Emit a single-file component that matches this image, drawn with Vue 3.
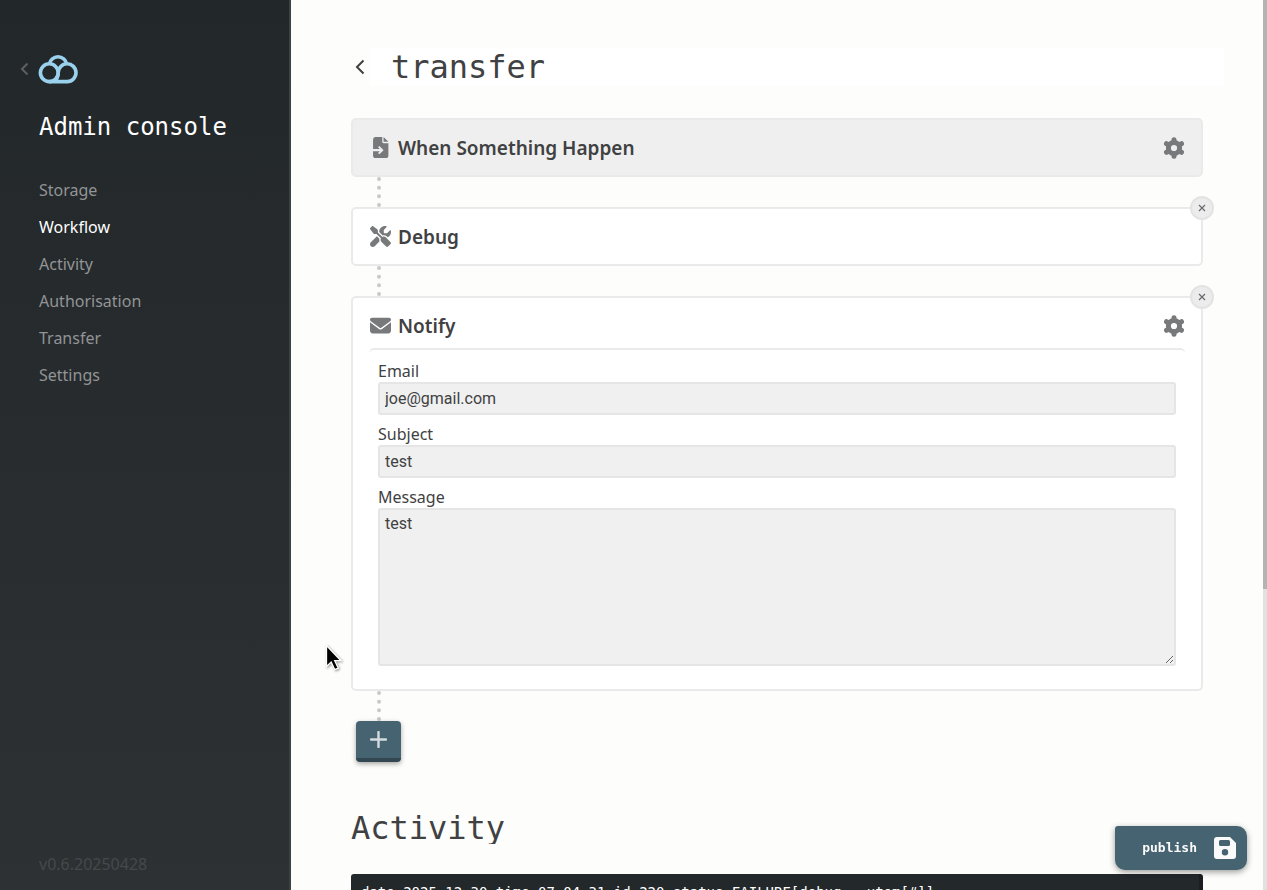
<script setup>
import { ref } from 'vue'

const links = ['Storage', 'Workflow', 'Activity', 'Authorisation', 'Transfer', 'Settings']
const current = 'Workflow'
const title = ref('transfer')
const email = ref('joe@gmail.com')
const subject = ref('test')
const message = ref('test')
const log = 'date=2025-12-30 time=07:04:31 id=220 status=FAILURE[debug : utem[#]]'
const teeth = 'M11 4V2.700M11 18v1.300M5 7.500 3.500 6.700M17 7.500l1.500-.8M5 14.500l-1.500.8M17 14.500l1.500.8'
</script>

<template>
  <div class="app">
    <aside class="sidebar">
      <div class="brand">
        <a href="#" class="collapse" aria-label="Back to files">
          <svg width="10" height="14" viewBox="0 0 10 14"><path d="M7.500 1.500 2 7 7.500 12.500" /></svg>
        </a>
        <svg class="logo" width="40" height="31" viewBox="0 0 40 31">
          <circle cx="11.300" cy="19.700" r="8.900" />
          <path d="M11.400 11A8.700 8.600 0 0 1 28.600 11" />
          <path d="M11.300 28.600H29.200A8.900 8.900 0 1 0 20.200 19.700C20.200 24 18.500 27 15.500 28.600" />
        </svg>
      </div>
      <h2>Admin console</h2>
      <nav>
        <a v-for="l in links" :key="l" href="#" :class="{ active: l === current }">{{ l }}</a>
      </nav>
      <div class="version">v0.6.20250428</div>
    </aside>

    <main class="page">
      <header class="heading">
        <a href="#" class="back" aria-label="Back to workflows">
          <svg width="10" height="16" viewBox="0 0 10 16"><path d="M8.500 1.500 2 8l6.500 6.500" /></svg>
        </a>
        <input v-model="title" class="title" aria-label="Workflow name" />
      </header>

      <section class="step trigger">
        <div class="step-head">
          <svg class="icon" width="21" height="21" viewBox="0 0 24 24">
            <path fill-rule="evenodd" d="M6 0h8v5.500A1.500 1.500 0 0 0 15.500 7H21v14a3 3 0 0 1-3 3H6.500a3 3 0 0 1-3-3v-4.800h7.700l-2 2 1.500 1.500L15.500 15l-4.800-4.700-1.500 1.500 2 2H3.500V3A3 3 0 0 1 6 0zM15.500 0 21 5.500h-5.500z" />
          </svg>
          <h3>When Something Happen</h3>
          <button class="gear" aria-label="Configure trigger">
            <svg width="22" height="22" viewBox="0 0 22 22"><circle cx="11" cy="11" r="5.600" /><path :d="teeth" /></svg>
          </button>
        </div>
      </section>
      <div class="link"></div>

      <section class="step">
        <button class="remove" aria-label="Remove Debug"><svg width="8" height="8" viewBox="0 0 8 8"><path d="M1 1l6 6M7 1 1 7" /></svg></button>
        <div class="step-head">
          <svg class="icon" width="21" height="21" viewBox="0 0 512 512">
            <path d="M78.600 5C69.100-2.400 55.600-1.500 47 7L7 47c-8.500 8.500-9.400 22-2.100 31.600l80 104c4.500 5.900 11.600 9.400 19 9.400h54.100l109 109c-14.700 29-10 65.400 14.300 89.600l112 112c12.500 12.500 32.800 12.500 45.300 0l64-64c12.500-12.500 12.500-32.800 0-45.300l-112-112c-24.200-24.200-60.600-29-89.600-14.300l-109-109V104c0-7.500-3.500-14.500-9.400-19L78.600 5zM19.900 396.100C7.200 408.800 0 426.100 0 444.100C0 481.600 30.400 512 67.900 512c18 0 35.300-7.200 48-19.900L233.700 374.300c-7.800-20.900-9-43.600-3.600-65.100l-61.700-61.700L19.900 396.100zM512 144c0-10.500-1.100-20.700-3.200-30.500c-2.400-11.200-16.100-14.100-24.200-6l-63.900 63.900c-3 3-7.100 4.700-11.300 4.700H352c-8.800 0-16-7.200-16-16V102.600c0-4.200 1.700-8.300 4.700-11.300l63.900-63.900c8.100-8.100 5.200-21.800-6-24.200C388.700 1.100 378.500 0 368 0C288.500 0 224 64.500 224 144l0 .8 85.300 85.300c36-9.100 75.800 .5 104 28.700L429 274.500c49-23 83-72.800 83-130.500z" />
          </svg>
          <h3>Debug</h3>
        </div>
      </section>
      <div class="link"></div>

      <section class="step">
        <button class="remove" aria-label="Remove Notify"><svg width="8" height="8" viewBox="0 0 8 8"><path d="M1 1l6 6M7 1 1 7" /></svg></button>
        <div class="step-head">
          <svg class="icon" width="21" height="21" viewBox="0 0 512 512">
            <path d="M48 64C21.500 64 0 85.500 0 112c0 15.100 7.100 29.300 19.200 38.400L236.800 313.600c11.400 8.500 27 8.500 38.400 0L492.800 150.400c12.100-9.100 19.200-23.300 19.200-38.400c0-26.500-21.500-48-48-48H48zM0 176V384c0 35.300 28.700 64 64 64H448c35.300 0 64-28.700 64-64V176L294.400 339.200c-22.800 17.100-54 17.100-76.800 0L0 176z" />
          </svg>
          <h3>Notify</h3>
          <button class="gear" aria-label="Configure Notify">
            <svg width="22" height="22" viewBox="0 0 22 22"><circle cx="11" cy="11" r="5.600" /><path :d="teeth" /></svg>
          </button>
        </div>
        <form class="fields" @submit.prevent>
          <label for="email">Email</label>
          <input id="email" v-model="email" />
          <label for="subject">Subject</label>
          <input id="subject" v-model="subject" />
          <label for="message">Message</label>
          <textarea id="message" v-model="message"></textarea>
        </form>
      </section>
      <div class="link"></div>
      <button class="add" aria-label="Add step">
        <svg width="17" height="17" viewBox="0 0 17 17"><path d="M8.500 1v15M1 8.500h15" /></svg>
      </button>

      <h2 class="activity">Activity</h2>
      <pre class="log">{{ log }}</pre>
    </main>

    <button class="publish">
      publish
      <svg width="22" height="22" viewBox="0 0 22 22">
        <path fill-rule="evenodd" d="M3 0h13l6 6v13a3 3 0 0 1-3 3H3a3 3 0 0 1-3-3V3a3 3 0 0 1 3-3zM6.500 3A1.500 1.500 0 0 0 5 4.500v3A1.500 1.500 0 0 0 6.500 9h8A1.500 1.500 0 0 0 16 7.500v-3A1.500 1.500 0 0 0 14.500 3zM11 12a3.200 3.200 0 1 0 0 6.400 3.200 3.200 0 0 0 0-6.400z" />
      </svg>
    </button>
    <div class="scrollbar"><div class="thumb"></div></div>
    <svg class="cursor" width="18" height="28" viewBox="0 0 18 28">
      <path d="M1.500 1.500v21l4.700-4.400 3.600 7.600 3.500-1.600-3.600-7.400h6.300z" />
    </svg>
  </div>
</template>

<style>
body {
  overflow: hidden;
}
</style>

<style scoped>
.app {
  display: flex;
  height: 100vh;
  overflow: hidden;
  background: #fdfdfb;
  color: #3f4142;
  font: 16px/22px "Noto Sans", sans-serif;
}
.app * {
  box-sizing: border-box;
}
svg {
  display: block;
}
a {
  text-decoration: none;
  color: inherit;
}
button {
  border: 0;
  padding: 0;
  cursor: pointer;
}
.sidebar {
  flex: 0 0 291px;
  display: flex;
  flex-direction: column;
  padding: 53px 20px 15px 39px;
  border-right: 2px solid #3c4144;
  background: linear-gradient(#22272a, #2d3133);
}
.brand {
  display: flex;
  align-items: center;
  gap: 8px;
  margin-left: -19px;
}
.collapse path,
.back path {
  fill: none;
  stroke: #5d6061;
  stroke-width: 2;
}
.logo {
  fill: none;
  stroke: #9ad1ed;
  stroke-width: 3.6;
}
.sidebar h2 {
  margin: 27px 0 36px;
  color: #fff;
  font: 24px/32px "DejaVu Sans Mono", monospace;
}
nav {
  display: flex;
  flex-direction: column;
  gap: 15px;
  color: #929495;
}
nav .active {
  color: #fff;
}
.version {
  margin-top: auto;
  color: #45494b;
}
.page {
  flex: 1;
  min-width: 0;
  padding: 48px 64px 0 60px;
  overflow: hidden;
}
.heading {
  display: flex;
  align-items: center;
  margin: 0 -21px 32px 4px;
}
.back path {
  stroke: #3f4142;
}
.title {
  flex: 1;
  min-width: 0;
  height: 38px;
  margin-left: 5px;
  padding: 0 21px;
  border: 0;
  background: #fff;
  color: #3f4142;
  font: 32px/38px "DejaVu Sans Mono", monospace;
}
.step {
  position: relative;
  padding: 0 16px;
  border: 2px solid #eaeaea;
  border-radius: 5px;
  background: #fff;
}
.trigger {
  background: #efefef;
}
.step-head {
  display: flex;
  align-items: center;
  height: 55px;
  padding-left: 1px;
}
.icon {
  fill: #77797b;
}
.step h3 {
  flex: 1;
  margin: 0 0 0 7px;
  font-size: 19px;
  font-weight: 600;
  line-height: 26px;
}
.gear {
  background: none;
}
.gear svg {
  fill: none;
  stroke: #77797b;
  stroke-width: 5;
  stroke-linecap: round;
}
.link {
  width: 4px;
  height: 30px;
  margin-left: 26px;
  border-left: 4px dotted #c9c9c9;
}
.remove {
  position: absolute;
  top: -13px;
  right: -13px;
  display: grid;
  place-items: center;
  width: 24px;
  height: 24px;
  border: 2px solid #e3e3e3;
  border-radius: 50%;
  background: #ececec;
}
.remove path {
  stroke: #68696a;
  stroke-width: 1.2;
}
.fields {
  display: flex;
  flex-direction: column;
  margin-top: -5px;
  padding: 10px 9px 23px;
  border-top: 2px solid #eaeaea;
  border-radius: 5px;
}
.fields input,
.fields textarea {
  width: 100%;
  height: 33px;
  margin: 0 0 8px;
  padding: 4px 5px;
  border: 2px solid #e5e5e5;
  border-radius: 3px;
  background: #f0f0f0;
  color: #3f4142;
  font: 16px/19px Roboto, sans-serif;
}
.fields textarea {
  height: 158px;
  margin: 0;
}
.add {
  display: grid;
  place-items: center;
  width: 45px;
  height: 41px;
  margin-left: 5px;
  border-bottom: 4px solid #334752;
  border-radius: 4px;
  background: #466372;
  box-shadow: 0 2px 5px rgba(0, 0, 0, 0.35);
}
.add path {
  stroke: #d5dce0;
  stroke-width: 2.4;
  stroke-linecap: round;
}
.activity {
  height: 34px;
  margin: 48px 0 30px;
  overflow: hidden;
  font: 32px/36px "DejaVu Sans Mono", monospace;
}
.log {
  min-height: 160px;
  margin: 0;
  padding: 10px;
  border-right: 4px solid #1b1e20;
  border-radius: 3px;
  background: #23282b;
  color: #fff;
  font: 14px/16px "DejaVu Sans Mono", monospace;
}
.publish {
  position: fixed;
  right: 20px;
  bottom: 20px;
  display: flex;
  align-items: center;
  gap: 17px;
  height: 44px;
  padding: 0 11px 0 27px;
  border-radius: 3px 10px 10px 10px;
  background: #466372;
  box-shadow: 0 2px 6px rgba(0, 0, 0, 0.4);
  color: #fafafa;
  fill: #fafafa;
  font: bold 13px/18px "DejaVu Sans Mono", monospace;
}
.scrollbar {
  position: fixed;
  top: 0;
  right: 0;
  bottom: 0;
  width: 4px;
  background: #e1e2e0;
}
.thumb {
  height: 66.2%;
  background: #b3b5b3;
}
.cursor {
  position: fixed;
  top: 644px;
  left: 325px;
  fill: #000;
  stroke: #fff;
  stroke-width: 1.3;
  filter: drop-shadow(1px 1px 1px rgba(0, 0, 0, 0.4));
}
</style>
